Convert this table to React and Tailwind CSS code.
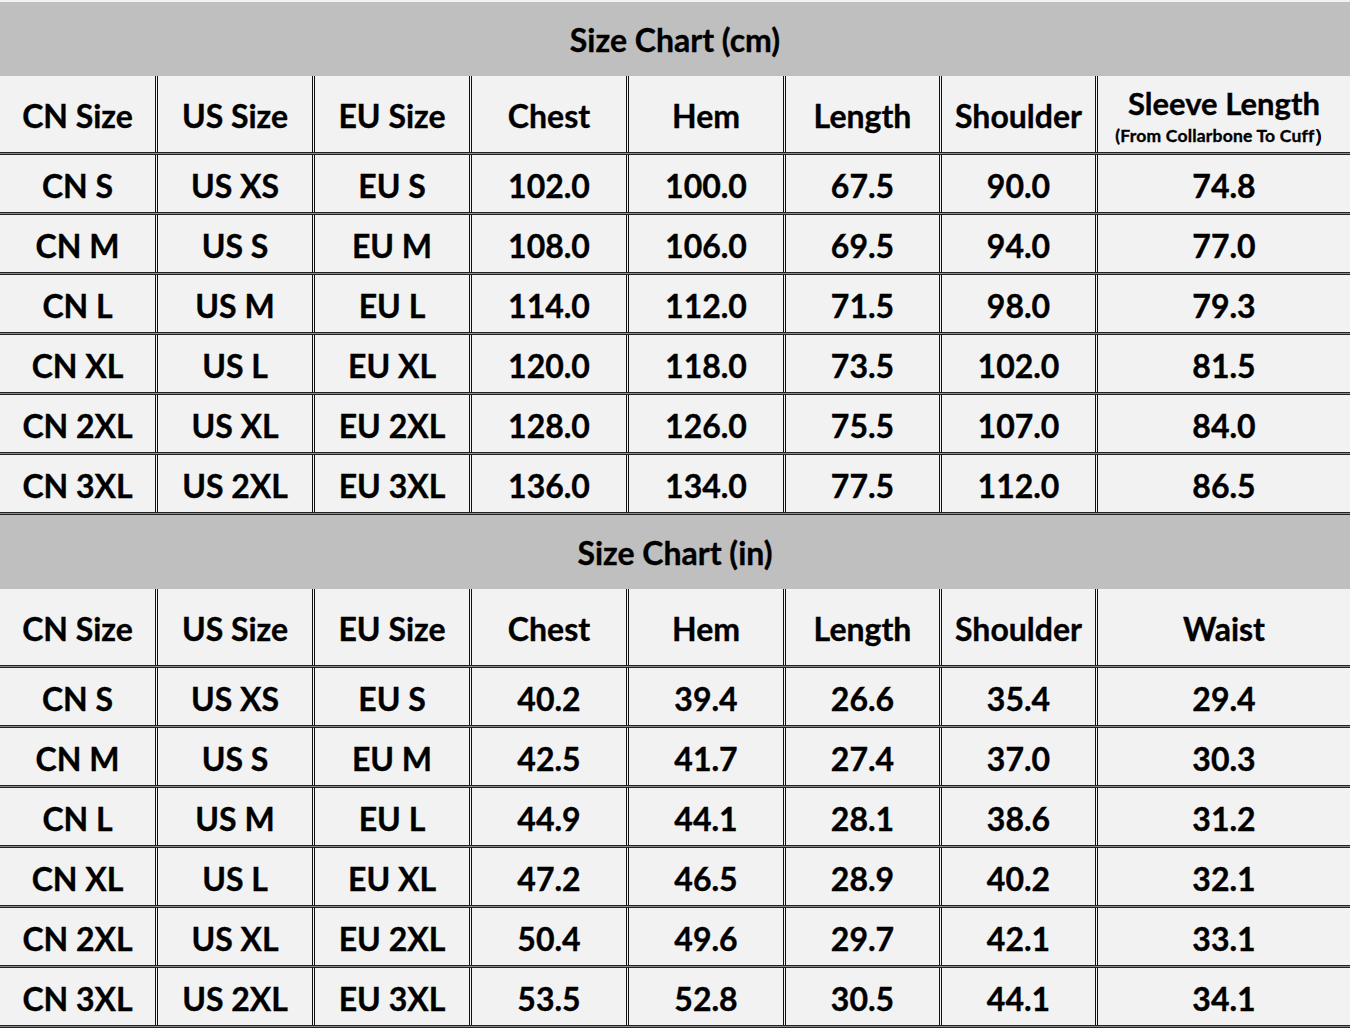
import React from 'react';

const cols = ['CN Size', 'US Size', 'EU Size', 'Chest', 'Hem', 'Length', 'Shoulder'];

const cmRows = [
    ['CN S', 'US XS', 'EU S', '102.0', '100.0', '67.5', '90.0', '74.8'],
    ['CN M', 'US S', 'EU M', '108.0', '106.0', '69.5', '94.0', '77.0'],
    ['CN L', 'US M', 'EU L', '114.0', '112.0', '71.5', '98.0', '79.3'],
    ['CN XL', 'US L', 'EU XL', '120.0', '118.0', '73.5', '102.0', '81.5'],
    ['CN 2XL', 'US XL', 'EU 2XL', '128.0', '126.0', '75.5', '107.0', '84.0'],
    ['CN 3XL', 'US 2XL', 'EU 3XL', '136.0', '134.0', '77.5', '112.0', '86.5'],
];

const inRows = [
    ['CN S', 'US XS', 'EU S', '40.2', '39.4', '26.6', '35.4', '29.4'],
    ['CN M', 'US S', 'EU M', '42.5', '41.7', '27.4', '37.0', '30.3'],
    ['CN L', 'US M', 'EU L', '44.9', '44.1', '28.1', '38.6', '31.2'],
    ['CN XL', 'US L', 'EU XL', '47.2', '46.5', '28.9', '40.2', '32.1'],
    ['CN 2XL', 'US XL', 'EU 2XL', '50.4', '49.6', '29.7', '42.1', '33.1'],
    ['CN 3XL', 'US 2XL', 'EU 3XL', '53.5', '52.8', '30.5', '44.1', '34.1'],
];

const gridCls = 'grid grid-cols-[155px_157px_157px_157px_157px_156px_156px_1fr] bg-[#f2f2f2]';

const Cell = ({ i, children }) => (
    <div className={`flex flex-col items-center justify-center pt-[4px] text-[32px] leading-none ${i > 0 ? 'border-l-[3px] border-double border-[#111]' : ''}`}>
        {children}
    </div>
);

const Sep = () => <div className="h-[3px] border-y border-[#222] bg-[#8a8a8a]"></div>;

const SizeTable = ({ title, last, rows }) => (
    <div>
        <div className="h-[74px] bg-[#bfbfbf] flex items-center justify-center text-[32px] pt-[2px]">{title}</div>
        <div className={`${gridCls} h-[76px]`}>
            {cols.map((c, i) => <Cell key={c} i={i}>{c}</Cell>)}
            <Cell i={7}>{last}</Cell>
        </div>
        {rows.map((r, ri) => (
            <React.Fragment key={ri}>
                <Sep />
                <div className={`${gridCls} h-[57px]`}>
                    {r.map((v, i) => <Cell key={i} i={i}>{v}</Cell>)}
                </div>
            </React.Fragment>
        ))}
        <Sep />
    </div>
);

export default function App() {
    return (
        <div className="w-[1350px] h-[1028px] bg-[#f2f2f2] pt-[2px] text-black font-bold overflow-hidden [-webkit-text-stroke:0.35px_black]" style={{ fontFamily: '"Lato", "Liberation Sans", sans-serif' }}>
            <SizeTable
                title="Size Chart (cm)"
                rows={cmRows}
                last={
                    <>
                        <span className="text-[31px] leading-none mt-[1px]">Sleeve Length</span>
                        <span className="text-[17.5px] leading-none mt-[8px] tracking-[0.2px]">(From Collarbone To Cuff）</span>
                    </>
                }
            />
            <SizeTable title="Size Chart (in)" rows={inRows} last="Waist" />
        </div>
    );
}
